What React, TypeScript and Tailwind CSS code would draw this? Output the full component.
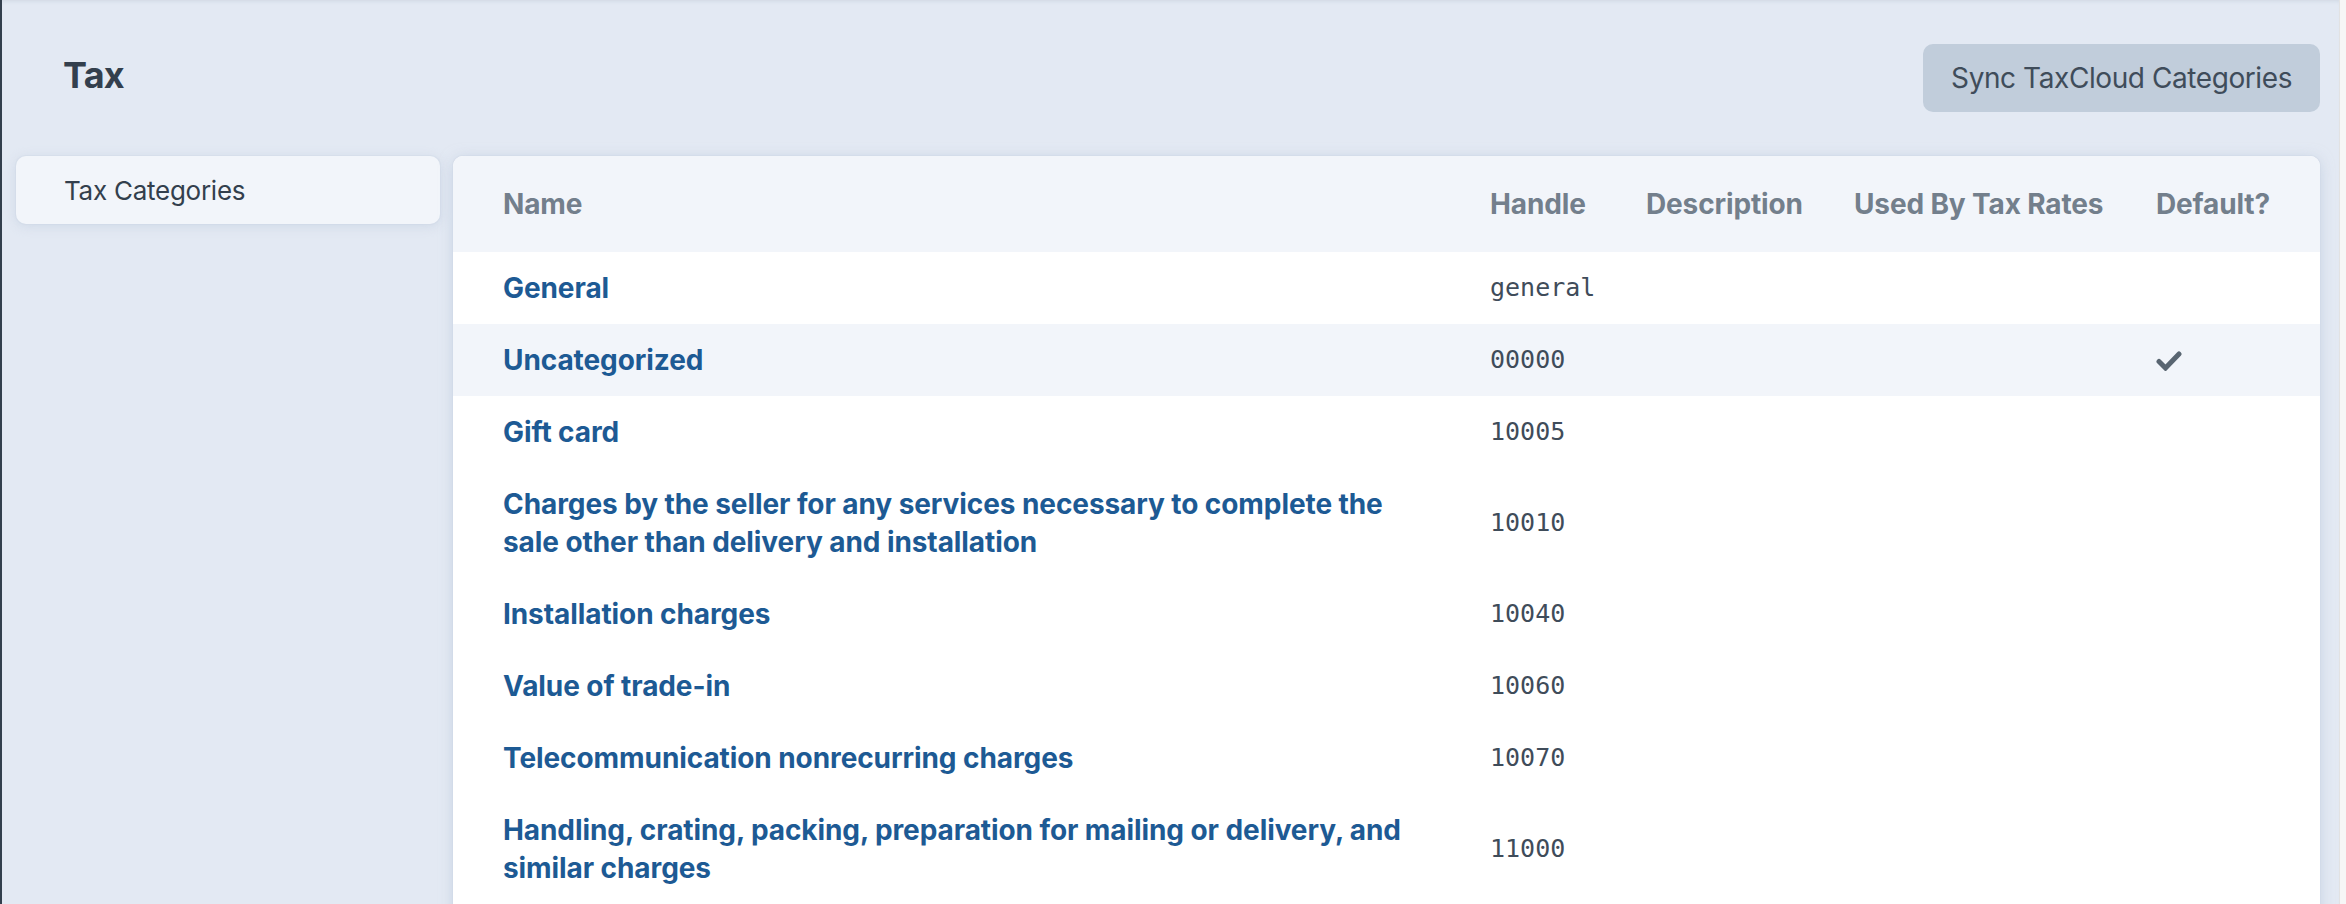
import React from "react";

const rows: { name: string; handle: string; def?: boolean }[] = [
  { name: "General", handle: "general" },
  { name: "Uncategorized", handle: "00000", def: true },
  { name: "Gift card", handle: "10005" },
  {
    name: "Charges by the seller for any services necessary to complete the sale other than delivery and installation",
    handle: "10010",
  },
  { name: "Installation charges", handle: "10040" },
  { name: "Value of trade-in", handle: "10060" },
  { name: "Telecommunication nonrecurring charges", handle: "10070" },
  {
    name: "Handling, crating, packing, preparation for mailing or delivery, and similar charges",
    handle: "11000",
  },
  { name: "Transportation, shipping, postage, and similar charges", handle: "11010" },
];

function Check() {
  return (
    <svg width="26" height="21" viewBox="0 0 26 21" className="block">
      <path
        d="M3 11.5 L9.5 18 L23 4"
        fill="none"
        stroke="#596571"
        strokeWidth="5"
        strokeLinecap="round"
        strokeLinejoin="miter"
      />
    </svg>
  );
}

export default function App() {
  const sans = { fontFamily: 'Inter, "Noto Sans", "Liberation Sans", sans-serif' };
  return (
    <div
      className="w-[2346px] h-[904px] overflow-hidden flex bg-[#e3e9f3] border-l-2 border-[#333f4d]"
      style={sans}
    >
      <div className="flex-1 flex flex-col pl-[14px] pr-[19px] shadow-[inset_0_4px_4px_-3px_rgba(60,80,110,0.12)]">
        {/* header */}
        <div className="flex items-center justify-between pt-[44px]">
          <h1 className="ml-[47px] text-[36px] font-bold leading-[44px] tracking-[-0.02em] text-[#333f4d] -mt-[6px]">
            Tax
          </h1>
          <button className="h-[68px] px-[28px] rounded-[10px] bg-[#c1cddb] text-[28px] leading-[40px] text-[#3f4c5a] tracking-[-0.015em]">
            Sync TaxCloud Categories
          </button>
        </div>
        {/* body */}
        <div className="flex mt-[44px] gap-[13px] items-start">
          <div className="w-[424px] h-[68px] rounded-[10px] bg-[#f2f5fa] flex items-center pl-[48px] text-[26px] text-[#333f4d] tracking-[-0.01em] shadow-[0_0_0_1px_rgba(205,216,228,0.35),0_2px_12px_rgba(180,195,215,0.45)]">
            Tax Categories
          </div>
          <div className="flex-1 rounded-t-[10px] bg-white overflow-hidden shadow-[0_0_0_1px_rgba(205,216,228,0.35),0_2px_14px_rgba(175,192,214,0.55)]">
            <table className="w-full table-fixed border-collapse">
              <colgroup>
                <col className="w-[1013px]" />
                <col className="w-[156px]" />
                <col className="w-[208px]" />
                <col className="w-[302px]" />
                <col className="w-[188px]" />
              </colgroup>
              <thead>
                <tr className="bg-[#f2f5fa] h-[96px] text-left text-[28px] font-bold text-[#737f8c] tracking-[-0.005em]">
                  <th className="pl-[50px] pr-[24px] font-bold">Name</th>
                  <th className="px-[24px] font-bold">Handle</th>
                  <th className="px-[24px] font-bold whitespace-nowrap">Description</th>
                  <th className="px-[24px] font-bold whitespace-nowrap">Used By Tax Rates</th>
                  <th className="pl-[24px] pr-[48px] font-bold">Default?</th>
                </tr>
              </thead>
              <tbody>
                {rows.map((r, i) => (
                  <tr key={r.handle} className={i === 1 ? "bg-[#f2f5fa]" : "bg-white"}>
                    <td className="pl-[50px] pr-[24px] py-[17px] leading-[38px] text-[28px] font-bold text-[#1d5a94] tracking-[-0.003em] align-middle">
                      {r.name}
                    </td>
                    <td
                      className="px-[24px] py-[17px] leading-[38px] text-[25px] text-[#3f4c5a] align-middle"
                      style={{ fontFamily: '"DejaVu Sans Mono", "Liberation Mono", monospace' }}
                    >
                      {r.handle}
                    </td>
                    <td className="px-[24px] py-[17px]" />
                    <td className="px-[24px] py-[17px]" />
                    <td className="pl-[24px] pr-[48px] py-[17px] align-middle">{r.def ? <Check /> : null}</td>
                  </tr>
                ))}
              </tbody>
            </table>
          </div>
        </div>
      </div>
      <div className="w-[7px] h-full bg-[#f6f6f6] border-l border-[#e2e2e2]" />
    </div>
  );
}
